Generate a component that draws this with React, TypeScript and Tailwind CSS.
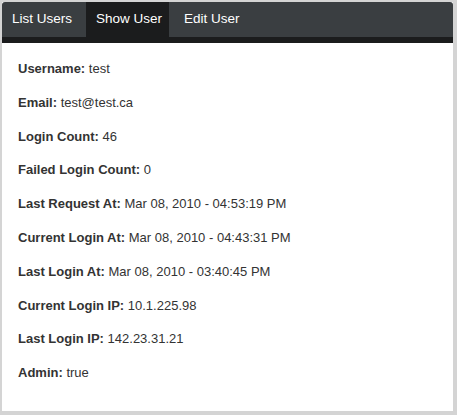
const rows: [string, string][] = [
  ["Username:", "test"],
  ["Email:", "test@test.ca"],
  ["Login Count:", "46"],
  ["Failed Login Count:", "0"],
  ["Last Request At:", "Mar 08, 2010 - 04:53:19 PM"],
  ["Current Login At:", "Mar 08, 2010 - 04:43:31 PM"],
  ["Last Login At:", "Mar 08, 2010 - 03:40:45 PM"],
  ["Current Login IP:", "10.1.225.98"],
  ["Last Login IP:", "142.23.31.21"],
  ["Admin:", "true"],
];

export default function App() {
  return (
    <div className="w-[457px] h-[415px] bg-[#d4d4d4] pt-[2px] pl-[2px] pr-[4px] pb-[4px] font-['Liberation_Sans',Arial,sans-serif]">
      <div className="h-full bg-white flex flex-col">
        <div className="flex bg-[#3a3e41] rounded-t-[3px] border-b-[6px] border-[#1b1c1d] text-[13.5px] text-white">
          <div className="w-[84px] pl-[10px] h-[35px] flex items-center">List Users</div>
          <div className="w-[83px] pl-[10px] h-[41px] pb-[6px] -mb-[6px] flex items-center bg-[#1b1c1d]">
            Show User
          </div>
          <div className="pl-[15px] h-[35px] flex items-center">Edit User</div>
        </div>
        <div className="px-[16px] pt-[17px] flex flex-col gap-[16.8px] text-[13px] leading-[17px] text-[#333]">
          {rows.map(([k, v]) => (
            <p key={k}>
              <b className="font-bold">{k}</b> {v}
            </p>
          ))}
        </div>
      </div>
    </div>
  );
}
